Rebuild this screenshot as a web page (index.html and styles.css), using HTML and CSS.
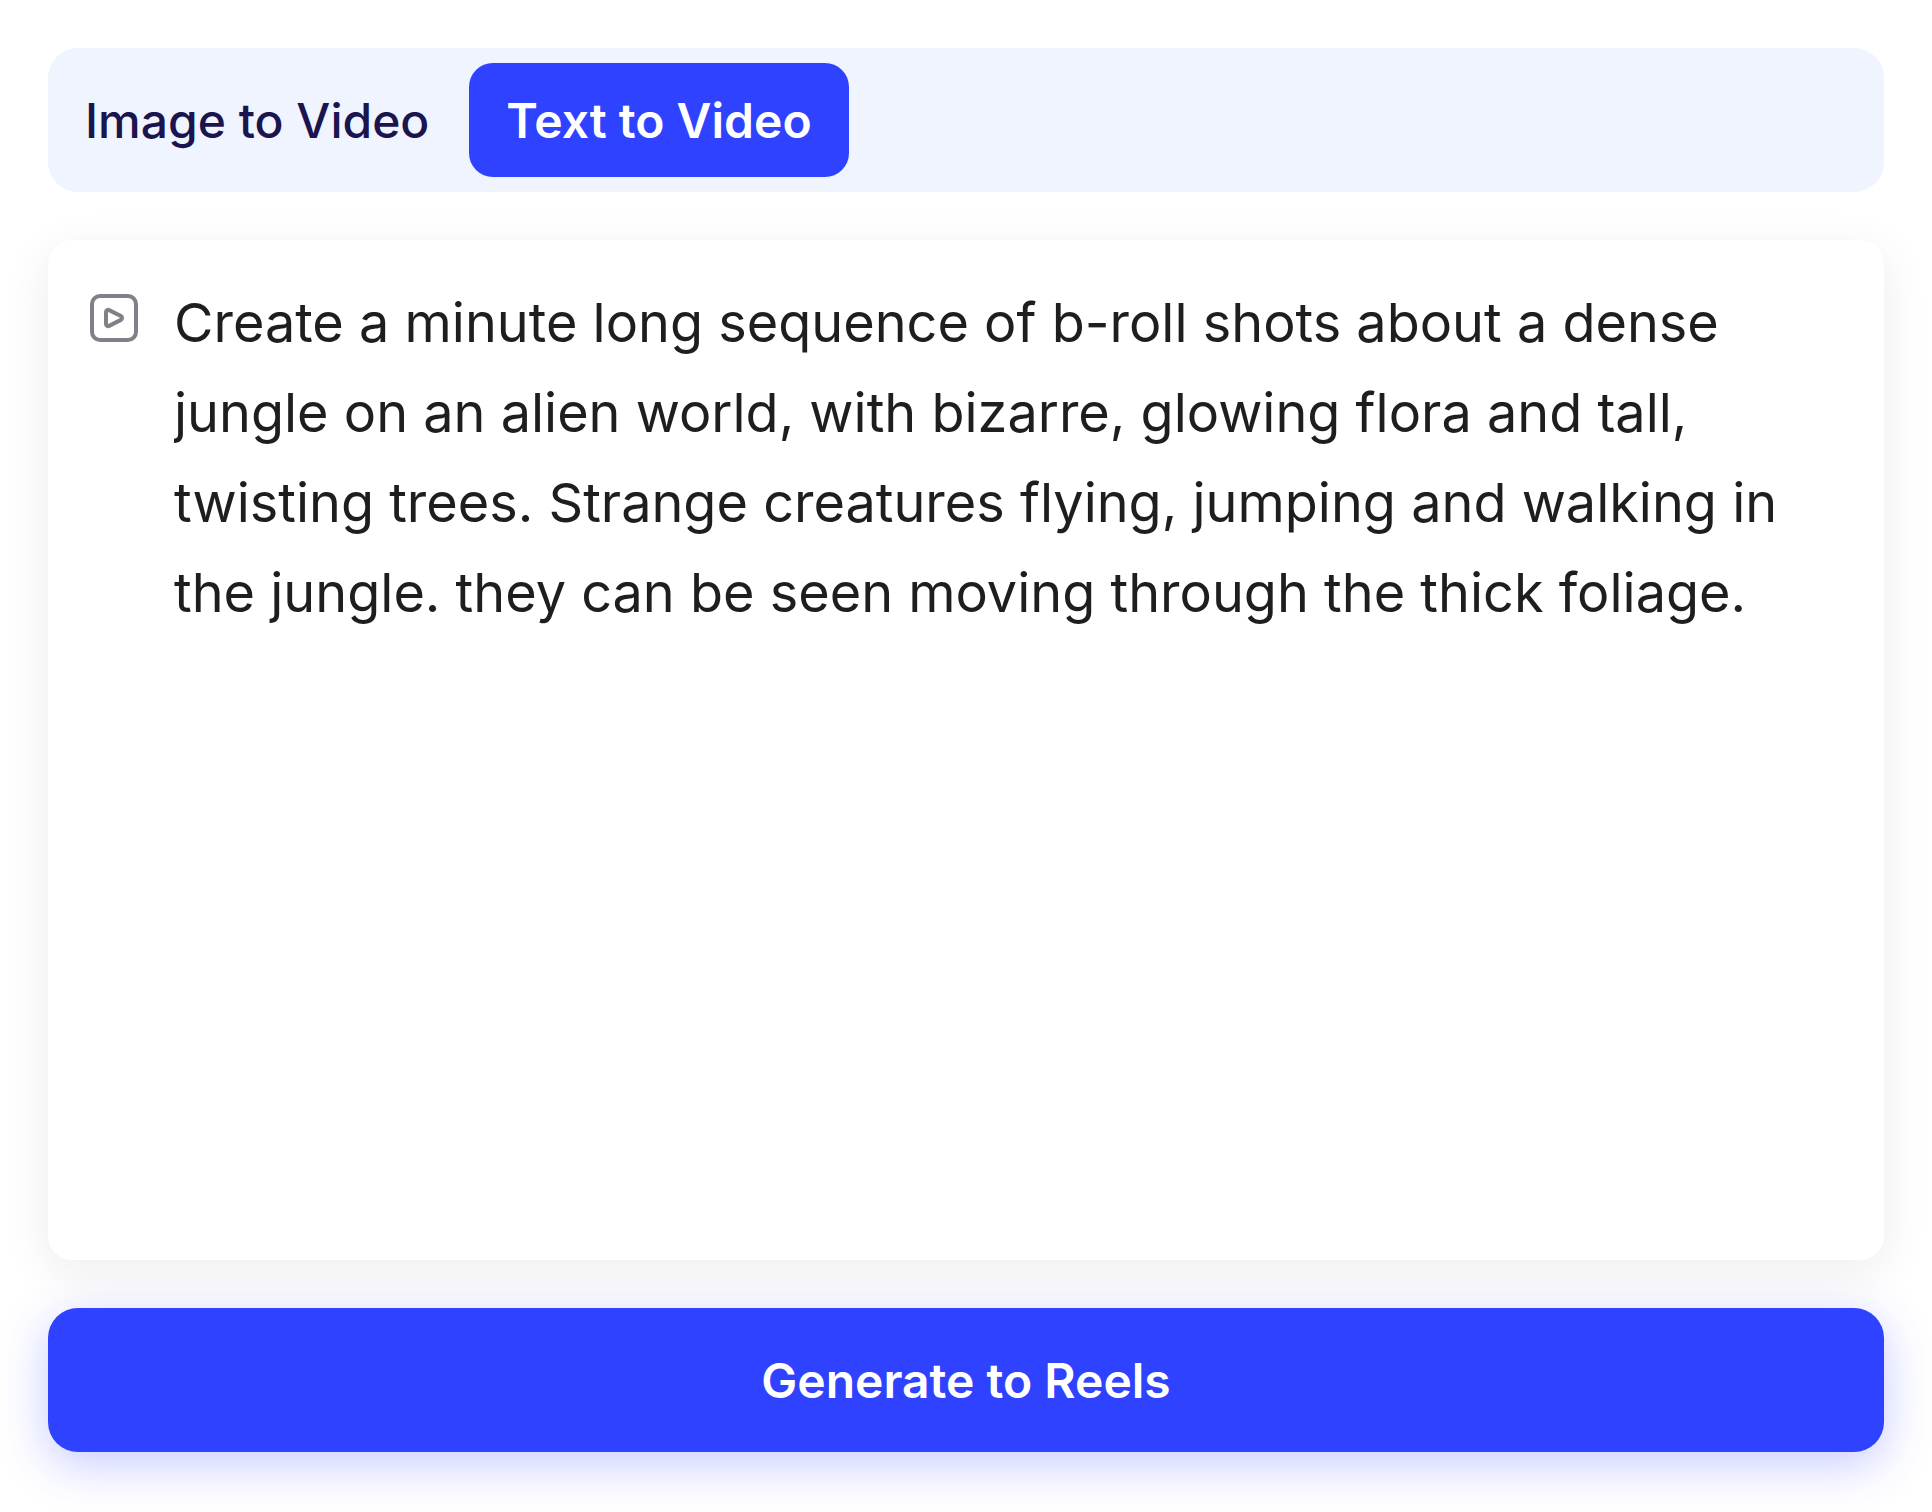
FILE: index.html
```html
<!DOCTYPE html>
<html lang="en">
<head>
  <meta charset="UTF-8" />
  <meta name="viewport" content="width=device-width, initial-scale=1.0"/>
  <title>Text to Video</title>
  <link rel="stylesheet" href="styles.css">
</head>
<body>

  <form class="generator">
    <nav class="tabs">
      <button type="button" class="tab">Image to Video</button>
      <button type="button" class="tab active">Text to Video</button>
    </nav>

    <div class="prompt-card">
      <label for="prompt" aria-label="Video prompt">
        <svg class="prompt-icon" viewBox="0 0 60 60" fill="none" stroke="currentColor" stroke-width="4" stroke-linejoin="round">
          <rect x="8" y="8" width="44" height="44" rx="8" />
          <path d="M22 24v12c0 1.600 1.700 2.600 3.100 1.900l11.800-6c1.500-.8 1.500-3 0-3.800l-11.800-6c-1.400-.7-3.100.3-3.100 1.900z" />
        </svg>
      </label>
      <textarea id="prompt" class="prompt" spellcheck="false">Create a minute long sequence of b-roll shots about a dense jungle on an alien world, with bizarre, glowing flora and tall, twisting trees. Strange creatures flying, jumping and walking in the jungle. they can be seen moving through the thick foliage.</textarea>
    </div>

    <button type="submit" class="generate">Generate to Reels</button>
  </form>

</body>
</html>
```

FILE: styles.css
```css
* {
  box-sizing: border-box;
}
body {
  margin: 0;
  background: #fff;
  font-family: Inter, "Liberation Sans", sans-serif;
}
button,
textarea {
  font-family: inherit;
  border: none;
}
button {
  cursor: pointer;
}
.generator {
  display: flex;
  flex-direction: column;
  gap: 48px;
  min-height: 100vh;
  padding: 48px 48px 60px;
}
.tabs {
  display: flex;
  gap: 3px;
  padding: 15px 0;
  background: #f0f4ff;
  border-radius: 30px;
}
.tab {
  padding: 28px 37px 26px;
  background: none;
  border-radius: 24px;
  color: #1a154e;
  font-size: 48px;
  font-weight: 500;
  line-height: 60px;
}
.tab.active {
  background: #2e42ff;
  color: #fff;
  font-weight: 600;
}
.prompt-card {
  display: flex;
  flex: 1;
  gap: 30px;
  padding: 38px 36px;
  background: #fff;
  border-radius: 24px;
  box-shadow: 0 12px 48px rgba(24, 24, 40, 0.08);
}
.prompt-icon {
  display: block;
  width: 60px;
  height: 60px;
  margin-top: 10px;
  color: #808088;
}
.prompt {
  flex: 1;
  min-width: 0;
  padding: 0;
  background: none;
  outline: none;
  resize: none;
  color: #1d1e20;
  font-size: 54px;
  line-height: 90px;
}
.generate {
  padding: 43px 42px 41px;
  background: #2e42ff;
  border-radius: 30px;
  box-shadow: 0 12px 48px rgba(46, 66, 255, 0.28);
  color: #fff;
  font-size: 48px;
  font-weight: 600;
  line-height: 60px;
}
```
